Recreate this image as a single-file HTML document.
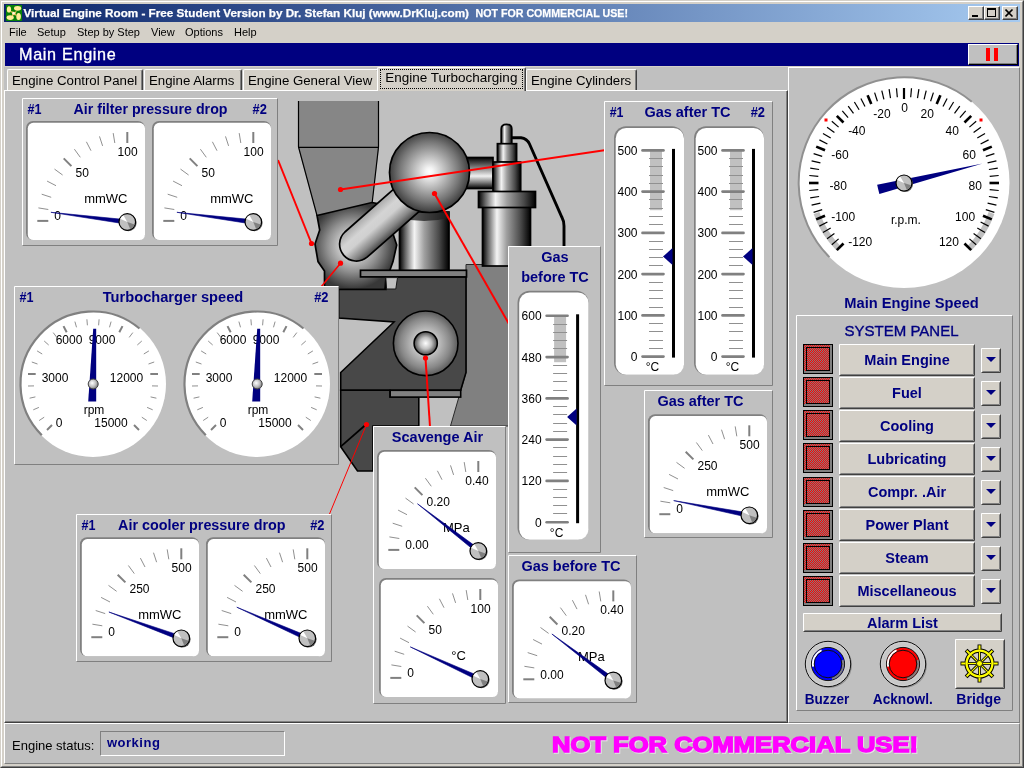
<!DOCTYPE html><html><head><meta charset="utf-8"><title>Virtual Engine Room</title><style>
*{box-sizing:border-box;margin:0;padding:0}
html,body{width:1024px;height:768px;overflow:hidden;background:#d4d0c8;font-family:"Liberation Sans",sans-serif;}
#w{position:absolute;left:0;top:0;width:1024px;height:768px;background:#d4d0c8;overflow:hidden;will-change:transform}
svg{will-change:transform}
.a{position:absolute}
.t{position:absolute;white-space:nowrap;line-height:1}
.nb{color:#000080;font-weight:bold;font-size:14px}
.raised{border:1px solid;border-color:#fff #808080 #808080 #fff;background:#c0c0c0}
.btn{position:absolute;background:#d4d0c8;border:1px solid;border-color:#fff #404040 #404040 #fff;box-shadow:inset -1px -1px 0 #808080}
</style></head><body><div id="w">
<div class="a" style="left:0;top:0;width:1024px;height:768px;border:1px solid;border-color:#d4d0c8 #404040 #404040 #d4d0c8"></div>
<div class="a" style="left:1px;top:1px;width:1022px;height:766px;border:1px solid;border-color:#fff #808080 #808080 #fff"></div>
<div class="a" style="left:4px;top:4px;width:1016px;height:18px;background:linear-gradient(to right,#0a246a,#a6caf0)"></div>
<svg class="a" style="left:0;top:0" width="1024" height="24" viewBox="0 0 1024 24" font-family="Liberation Sans, sans-serif" font-size="11.4" font-weight="bold" fill="#fff" stroke="#fff" stroke-width="0.25"><text x="23.5" y="16.8" textLength="445.5" lengthAdjust="spacingAndGlyphs">Virtual Engine Room - Free Student Version by Dr. Stefan Kluj (www.DrKluj.com)</text><text x="475.5" y="16.8" textLength="152.5" lengthAdjust="spacingAndGlyphs">NOT FOR COMMERCIAL USE!</text></svg>
<svg class="a" style="left:6px;top:5px" width="16" height="16" viewBox="0 0 16 16"><rect width="16" height="16" fill="#088008"/><ellipse cx="3" cy="4.4" rx="2.1" ry="3.2" fill="#ffec98"/><ellipse cx="11.6" cy="3.3" rx="3.6" ry="2.4" fill="#ffec98"/><ellipse cx="12.6" cy="11.4" rx="2.3" ry="3.5" fill="#ffec98"/><ellipse cx="4.2" cy="12.6" rx="3.6" ry="2.4" fill="#ffec98"/><path d="M4 6 L9 7 L11 5 L9.5 9 L11.5 11 L8 10 L5.5 11.5 L6.5 8.5 Z" fill="#f4c860"/><circle cx="7.6" cy="8.3" r="1.2" fill="#fff8e0"/></svg>
<div class="btn" style="left:968px;top:6px;width:16px;height:14px"></div>
<div class="btn" style="left:984px;top:6px;width:16px;height:14px"></div>
<div class="btn" style="left:1002px;top:6px;width:16px;height:14px"></div>
<div class="a" style="left:972px;top:15px;width:6px;height:2px;background:#000"></div>
<div class="a" style="left:987px;top:8px;width:9px;height:9px;border:1px solid #000;border-top-width:2px"></div>
<svg class="a" style="left:1005px;top:9px" width="9" height="8" viewBox="0 0 9 8"><path d="M0.5 0.5 L7.5 7.5 M7.5 0.5 L0.5 7.5" stroke="#000" stroke-width="1.6" fill="none"/></svg>
<div class="t" style="left:9px;top:27px;font-size:11px;color:#000">File</div>
<div class="t" style="left:37px;top:27px;font-size:11px;color:#000">Setup</div>
<div class="t" style="left:77px;top:27px;font-size:11px;color:#000">Step by Step</div>
<div class="t" style="left:151px;top:27px;font-size:11px;color:#000">View</div>
<div class="t" style="left:185px;top:27px;font-size:11px;color:#000">Options</div>
<div class="t" style="left:234px;top:27px;font-size:11px;color:#000">Help</div>
<div class="a" style="left:5px;top:43px;width:1014px;height:23px;background:#000080"></div>
<div class="t" style="left:19px;top:45.6px;font-size:16.2px;color:#fff;letter-spacing:0.68px;-webkit-text-stroke:0.3px #fff">Main Engine</div>
<div class="a" style="left:968px;top:44px;width:50px;height:21px;background:#c0c0c0;border:1px solid;border-color:#fff #000 #000 #fff;box-shadow:inset -1px -1px 0 #808080"></div>
<div class="a" style="left:986px;top:48px;width:4px;height:13px;background:#ff0000"></div>
<div class="a" style="left:994px;top:48px;width:4px;height:13px;background:#ff0000"></div>
<div class="a" style="left:4px;top:67px;width:1016px;height:656px;background:#c0c0c0"></div>
<div class="a" style="left:4px;top:90px;width:784px;height:633px;background:#c0c0c0;border:1px solid;border-color:#fff #404040 #404040 #fff;box-shadow:inset -1px -1px 0 #808080"></div>
<div class="a" style="left:7px;top:69px;width:136px;height:21px;background:#d4d0c8;border:1px solid;border-color:#fff #404040 #d4d0c8 #fff;border-bottom:none;border-radius:2px 2px 0 0;box-shadow:inset -1px 0 0 #808080"></div>
<div class="t" style="left:12px;top:74px;font-size:13.25px;color:#000">Engine Control Panel</div>
<div class="a" style="left:144px;top:69px;width:98px;height:21px;background:#d4d0c8;border:1px solid;border-color:#fff #404040 #d4d0c8 #fff;border-bottom:none;border-radius:2px 2px 0 0;box-shadow:inset -1px 0 0 #808080"></div>
<div class="t" style="left:149px;top:74px;font-size:13.25px;color:#000">Engine Alarms</div>
<div class="a" style="left:243px;top:69px;width:136px;height:21px;background:#d4d0c8;border:1px solid;border-color:#fff #404040 #d4d0c8 #fff;border-bottom:none;border-radius:2px 2px 0 0;box-shadow:inset -1px 0 0 #808080"></div>
<div class="t" style="left:248px;top:74px;font-size:13.25px;color:#000">Engine General View</div>
<div class="a" style="left:377px;top:67px;width:149px;height:24px;background:#d4d0c8;border:1px solid;border-color:#fff #404040 #d4d0c8 #fff;border-bottom:none;border-radius:2px 2px 0 0;box-shadow:inset -1px 0 0 #808080"></div>
<div class="a" style="left:380px;top:69px;width:143px;height:20px;border:1px dotted #000"></div>
<div class="t" style="left:385.3px;top:71.3px;font-size:13.5px;color:#000">Engine Turbocharging</div>
<div class="a" style="left:526px;top:69px;width:111px;height:21px;background:#d4d0c8;border:1px solid;border-color:#fff #404040 #d4d0c8 #fff;border-bottom:none;border-radius:2px 2px 0 0;box-shadow:inset -1px 0 0 #808080"></div>
<div class="t" style="left:531px;top:74px;font-size:13.25px;color:#000">Engine Cylinders</div>
<div class="a" style="left:788px;top:67px;width:232px;height:656px;background:#c0c0c0;border:1px solid;border-color:#fff #808080 #808080 #fff"></div>
<div class="a" style="left:4px;top:723px;width:1016px;height:41px;background:#c0c0c0;border:1px solid;border-color:#fff #808080 #808080 #fff"></div>
<div class="t" style="left:12px;top:739px;font-size:13px;color:#000">Engine status:</div>
<div class="a" style="left:100px;top:731px;width:185px;height:25px;border:1px solid;border-color:#808080 #fff #fff #808080"></div>
<div class="t" style="left:107px;top:736px;font-size:13px;color:#000080;font-weight:bold;letter-spacing:0.5px">working</div>
<svg class="a" style="left:0;top:720px" width="1024" height="48" viewBox="0 720 1024 48" font-family="Liberation Sans, sans-serif"><text x="553" y="752.8" font-size="21.3" font-weight="bold" fill="#e4e4e4" stroke="#e4e4e4" stroke-width="1.4" textLength="366" lengthAdjust="spacingAndGlyphs">NOT FOR COMMERCIAL USE!</text><text x="552" y="751.8" font-size="21.3" font-weight="bold" fill="#ff00ff" stroke="#ff00ff" stroke-width="1.4" textLength="366" lengthAdjust="spacingAndGlyphs">NOT FOR COMMERCIAL USE!</text></svg>
<svg class="a" style="left:0;top:0" width="1024" height="768" viewBox="0 0 1024 768" font-family="Liberation Sans, sans-serif"><defs>
<radialGradient id="sph" cx="50%" cy="49%" r="50%"><stop offset="0" stop-color="#fff"/><stop offset="0.1" stop-color="#f4f4f4"/><stop offset="0.45" stop-color="#b0b0b0"/><stop offset="0.75" stop-color="#767676"/><stop offset="1" stop-color="#404040"/></radialGradient>
<radialGradient id="sph2" cx="50%" cy="50%" r="55%"><stop offset="0" stop-color="#e0e0e0"/><stop offset="0.35" stop-color="#c0c0c0"/><stop offset="0.7" stop-color="#888888"/><stop offset="1" stop-color="#484848"/></radialGradient>
<radialGradient id="cmp" gradientUnits="userSpaceOnUse" cx="353" cy="246" r="43"><stop offset="0" stop-color="#f0f0f0"/><stop offset="0.33" stop-color="#c4c4c4"/><stop offset="0.6" stop-color="#909090"/><stop offset="0.85" stop-color="#585858"/><stop offset="1" stop-color="#383838"/></radialGradient><radialGradient id="sph3" cx="50%" cy="50%" r="50%"><stop offset="0" stop-color="#fff"/><stop offset="0.5" stop-color="#c0c0c0"/><stop offset="1" stop-color="#484848"/></radialGradient>
<radialGradient id="pv" cx="40%" cy="40%" r="60%"><stop offset="0" stop-color="#fff"/><stop offset="0.6" stop-color="#c0c0c0"/><stop offset="1" stop-color="#808080"/></radialGradient>
<linearGradient id="cylh" x1="0" x2="1" y1="0" y2="0"><stop offset="0" stop-color="#000"/><stop offset="0.12" stop-color="#686868"/><stop offset="0.3" stop-color="#f4f4f4"/><stop offset="0.5" stop-color="#a0a0a0"/><stop offset="0.8" stop-color="#484848"/><stop offset="1" stop-color="#000"/></linearGradient>
<linearGradient id="cylv" x1="0" x2="0" y1="0" y2="1"><stop offset="0" stop-color="#000"/><stop offset="0.2" stop-color="#505050"/><stop offset="0.6" stop-color="#f0f0f0"/><stop offset="0.8" stop-color="#808080"/><stop offset="1" stop-color="#000"/></linearGradient>
<linearGradient id="tube" gradientUnits="userSpaceOnUse" x1="344.9" y1="232" x2="367.1" y2="257.2"><stop offset="0" stop-color="#a8a8a8"/><stop offset="0.3" stop-color="#d4d4d4"/><stop offset="0.5" stop-color="#d0d0d0"/><stop offset="0.8" stop-color="#888888"/><stop offset="1" stop-color="#484848"/></linearGradient>
</defs><path d="M298 101 H379 V147 L372.3 202.5 L317 215.5 L298 147 Z" fill="#868686"/><path d="M298.5 101 V147 L317 215.5 M378.5 101 V147 L372.2 202.5" fill="none" stroke="#000" stroke-width="1.2"/><path d="M298.5 147.3 H378.5" stroke="#000" stroke-width="1.2"/><path d="M317 215.5 L372 202.5 L377 203.5 L393 233.8 L396.7 245 L393 261.6 L390 270 L386 277.4 L385 289.5 L324.5 289.5 L324.5 271 L318 261.6 L315 244 L319.7 230 Z" fill="url(#cmp)" stroke="#000" stroke-width="1.7"/><path d="M466 264.5 H540 V426 H450.5 L466 372.5 Z" fill="#808080" stroke="#282828" stroke-width="1"/><rect x="399.5" y="212" width="49.5" height="59" fill="url(#cylh)" stroke="#000" stroke-width="1.7"/><path d="M399.5 212 H449 V218 Q424 224 399.5 218 Z" fill="#202020" opacity="0.75"/><rect x="462" y="157.5" width="31" height="31" fill="url(#cylv)" stroke="#000" stroke-width="1.7"/><path d="M501.2 145 V129 Q501.2 124.3 506.5 124.3 Q511.8 124.3 511.8 129 V145 Z" fill="url(#cylh)" stroke="#000" stroke-width="1.7"/><rect x="497.4" y="143.7" width="19.2" height="18.5" fill="url(#cylh)" stroke="#000" stroke-width="1.7"/><rect x="493" y="162" width="27.7" height="30" fill="url(#cylh)" stroke="#000" stroke-width="1.7"/><rect x="482.5" y="206" width="48" height="60" fill="url(#cylh)" stroke="#000" stroke-width="1.7"/><rect x="478.5" y="191.5" width="57" height="16" fill="url(#cylh)" stroke="#000" stroke-width="1.7"/><path d="M512 137.7 H521 Q527 138.5 529.5 144 L562 217.5 Q564 221 564 226 V250" fill="none" stroke="#000" stroke-width="2.9"/><path d="M344.9 232 L405 179.1 L427.2 204.3 L367.1 257.2 A16.8 16.8 0 0 1 344.9 232 Z" fill="url(#tube)" stroke="#000" stroke-width="1.7"/><circle cx="429.5" cy="172.5" r="40" fill="url(#sph)" stroke="#000" stroke-width="1.7"/><path d="M338.7 289.5 H386 V277 H466 V372.5 L460.7 390.3 H340.7 V372.5 L394 322 L338.7 318 Z" fill="#484848" stroke="#000" stroke-width="1.6"/><path d="M340.7 390.3 H390 V397 H418.8 V426 H373 V471 H357.5 L340.7 446.7 Z" fill="#484848" stroke="#000" stroke-width="1.6"/><path d="M340.7 446.7 L366 424.5" stroke="#000" stroke-width="1.7"/><rect x="360.5" y="270.3" width="106" height="6.6" fill="#808080" stroke="#000" stroke-width="1.7"/><rect x="390.2" y="390.3" width="70.5" height="6.8" fill="#808080" stroke="#000" stroke-width="1.6"/><path d="M385.8 277.6 H397.5 L395.8 289 H386.6 Z" fill="#c0c0c0" stroke="#181818" stroke-width="1"/><circle cx="425.7" cy="343.3" r="32.3" fill="url(#sph2)" stroke="#000" stroke-width="1.6"/><circle cx="425.7" cy="343.3" r="11.6" fill="url(#sph3)" stroke="#000" stroke-width="1.6"/><line x1="340.5" y1="189.5" x2="606" y2="150" stroke="#ff0000" stroke-width="2"/><circle cx="340.5" cy="189.5" r="2.6" fill="#ff0000"/><line x1="311.5" y1="243.5" x2="278" y2="160" stroke="#ff0000" stroke-width="2"/><circle cx="311.5" cy="243.5" r="2.6" fill="#ff0000"/><line x1="340.5" y1="263.2" x2="321" y2="287" stroke="#ff0000" stroke-width="1.5"/><circle cx="340.5" cy="263.2" r="2.6" fill="#ff0000"/><line x1="434.5" y1="193.5" x2="509" y2="324" stroke="#ff0000" stroke-width="2"/><circle cx="434.5" cy="193.5" r="2.6" fill="#ff0000"/><line x1="425.5" y1="358" x2="430" y2="427" stroke="#ff0000" stroke-width="2"/><circle cx="425.5" cy="358" r="2.6" fill="#ff0000"/><line x1="366.5" y1="424.5" x2="329.5" y2="514" stroke="#ff0000" stroke-width="1"/><circle cx="366.5" cy="424.5" r="2.6" fill="#ff0000"/><rect x="22" y="98" width="256" height="148" fill="#c0c0c0"/><path d="M22.5 245.5 V98.5 H277.5" fill="none" stroke="#fff" stroke-width="1"/><path d="M22.5 245.5 H277.5 V98.5" fill="none" stroke="#808080" stroke-width="1"/><text x="150.5" y="114" font-size="14.5" font-weight="bold" fill="#000080" text-anchor="middle" textLength="154" lengthAdjust="spacingAndGlyphs">Air filter pressure drop</text><text x="27.6" y="114" font-size="14.5" font-weight="bold" fill="#000080" text-anchor="start" textLength="14" lengthAdjust="spacingAndGlyphs">#1</text><text x="266.8" y="114" font-size="14.5" font-weight="bold" fill="#000080" text-anchor="end" textLength="14.3" lengthAdjust="spacingAndGlyphs">#2</text><rect x="26" y="121" width="119" height="119" rx="7" fill="#808080"/><rect x="27.8" y="122.8" width="117.2" height="117.2" rx="5.5" fill="#fff"/><line x1="37.3" y1="220.9" x2="48.3" y2="220.9" stroke="#808080" stroke-width="2"/><line x1="38.4" y1="207.9" x2="48.3" y2="209.5" stroke="#909090" stroke-width="1"/><line x1="41.7" y1="194.2" x2="51.2" y2="197.3" stroke="#909090" stroke-width="1"/><line x1="47.1" y1="181.1" x2="56.0" y2="185.7" stroke="#909090" stroke-width="1"/><line x1="54.5" y1="169.1" x2="62.6" y2="175.0" stroke="#909090" stroke-width="1"/><line x1="63.7" y1="158.4" x2="71.4" y2="166.1" stroke="#808080" stroke-width="2"/><line x1="74.4" y1="149.2" x2="80.3" y2="157.3" stroke="#909090" stroke-width="1"/><line x1="86.4" y1="141.8" x2="91.0" y2="150.7" stroke="#909090" stroke-width="1"/><line x1="99.5" y1="136.4" x2="102.6" y2="145.9" stroke="#909090" stroke-width="1"/><line x1="113.2" y1="133.1" x2="114.8" y2="143.0" stroke="#909090" stroke-width="1"/><line x1="127.3" y1="132.0" x2="127.3" y2="143.0" stroke="#808080" stroke-width="2"/><text x="54.3" y="220.1" font-size="12" fill="#000" text-anchor="start">0</text><text x="75.5" y="177" font-size="12" fill="#000" text-anchor="start">50</text><text x="137.6" y="156" font-size="12" fill="#000" text-anchor="end">100</text><text x="105.8" y="203" font-size="13" fill="#000" text-anchor="middle">mmWC</text><path d="M50.9 212.3 L127.6 219.8 L127.0 224.2 Z" fill="#000080" stroke="#000080" stroke-width="0.6"/><circle cx="128.3" cy="223" r="8.3" fill="#606060"/><circle cx="127.3" cy="222" r="8.3" fill="#c0c0c0" stroke="#000" stroke-width="1.2"/><path d="M127.3 222 L120.2 218.8 A8.3 8.3 0 0 1 123.4 215.2 Z" fill="#fff"/><path d="M127.3 222 L134.7 224.4 A8.3 8.3 0 0 1 130.2 229.2 Z" fill="#808080"/><rect x="152" y="121" width="119" height="119" rx="7" fill="#808080"/><rect x="153.8" y="122.8" width="117.2" height="117.2" rx="5.5" fill="#fff"/><line x1="163.3" y1="220.9" x2="174.3" y2="220.9" stroke="#808080" stroke-width="2"/><line x1="164.4" y1="207.9" x2="174.3" y2="209.5" stroke="#909090" stroke-width="1"/><line x1="167.7" y1="194.2" x2="177.2" y2="197.3" stroke="#909090" stroke-width="1"/><line x1="173.1" y1="181.1" x2="182.0" y2="185.7" stroke="#909090" stroke-width="1"/><line x1="180.5" y1="169.1" x2="188.6" y2="175.0" stroke="#909090" stroke-width="1"/><line x1="189.7" y1="158.4" x2="197.4" y2="166.1" stroke="#808080" stroke-width="2"/><line x1="200.4" y1="149.2" x2="206.3" y2="157.3" stroke="#909090" stroke-width="1"/><line x1="212.4" y1="141.8" x2="217.0" y2="150.7" stroke="#909090" stroke-width="1"/><line x1="225.5" y1="136.4" x2="228.6" y2="145.9" stroke="#909090" stroke-width="1"/><line x1="239.2" y1="133.1" x2="240.8" y2="143.0" stroke="#909090" stroke-width="1"/><line x1="253.3" y1="132.0" x2="253.3" y2="143.0" stroke="#808080" stroke-width="2"/><text x="180.3" y="220.1" font-size="12" fill="#000" text-anchor="start">0</text><text x="201.5" y="177" font-size="12" fill="#000" text-anchor="start">50</text><text x="263.6" y="156" font-size="12" fill="#000" text-anchor="end">100</text><text x="231.8" y="203" font-size="13" fill="#000" text-anchor="middle">mmWC</text><path d="M176.9 212.3 L253.6 219.8 L253.0 224.2 Z" fill="#000080" stroke="#000080" stroke-width="0.6"/><circle cx="254.3" cy="223" r="8.3" fill="#606060"/><circle cx="253.3" cy="222" r="8.3" fill="#c0c0c0" stroke="#000" stroke-width="1.2"/><path d="M253.3 222 L246.2 218.8 A8.3 8.3 0 0 1 249.4 215.2 Z" fill="#fff"/><path d="M253.3 222 L260.7 224.4 A8.3 8.3 0 0 1 256.2 229.2 Z" fill="#808080"/><rect x="14" y="286" width="325" height="179" fill="#c0c0c0"/><path d="M14.5 464.5 V286.5 H338.5" fill="none" stroke="#fff" stroke-width="1"/><path d="M14.5 464.5 H338.5 V286.5" fill="none" stroke="#808080" stroke-width="1"/><text x="173" y="302" font-size="14.5" font-weight="bold" fill="#000080" text-anchor="middle" textLength="140.5" lengthAdjust="spacingAndGlyphs">Turbocharger speed</text><text x="19.5" y="302" font-size="14.5" font-weight="bold" fill="#000080" text-anchor="start" textLength="14" lengthAdjust="spacingAndGlyphs">#1</text><text x="328.5" y="302" font-size="14.5" font-weight="bold" fill="#000080" text-anchor="end" textLength="14.3" lengthAdjust="spacingAndGlyphs">#2</text><circle cx="93" cy="384" r="73" fill="#fff"/><path d="M41.8 435.2 A72.4 72.4 0 0 1 139.5 328.5" fill="none" stroke="#808080" stroke-width="2.2"/><line x1="47.0" y1="430.0" x2="52.0" y2="425.0" stroke="#808080" stroke-width="2"/><line x1="39.2" y1="420.5" x2="44.2" y2="417.2" stroke="#909090" stroke-width="1"/><line x1="33.3" y1="409.8" x2="38.9" y2="407.4" stroke="#909090" stroke-width="1"/><line x1="29.6" y1="398.2" x2="35.4" y2="396.9" stroke="#909090" stroke-width="1"/><line x1="28.0" y1="386.0" x2="34.0" y2="385.9" stroke="#909090" stroke-width="1"/><line x1="28" y1="374" x2="35.7" y2="374" stroke="#808080" stroke-width="2"/><line x1="31.8" y1="362.0" x2="37.5" y2="364.0" stroke="#909090" stroke-width="1"/><line x1="37.1" y1="350.9" x2="42.2" y2="354.0" stroke="#909090" stroke-width="1"/><line x1="44.2" y1="341.0" x2="48.7" y2="345.0" stroke="#909090" stroke-width="1"/><line x1="53.2" y1="332.6" x2="56.8" y2="337.4" stroke="#909090" stroke-width="1"/><line x1="63.5" y1="326.1" x2="66.7" y2="332.3" stroke="#808080" stroke-width="2"/><line x1="74.9" y1="321.6" x2="76.5" y2="327.3" stroke="#909090" stroke-width="1"/><line x1="86.9" y1="319.3" x2="87.4" y2="325.3" stroke="#909090" stroke-width="1"/><line x1="99.1" y1="319.3" x2="98.6" y2="325.3" stroke="#909090" stroke-width="1"/><line x1="111.1" y1="321.6" x2="109.5" y2="327.3" stroke="#909090" stroke-width="1"/><line x1="122.5" y1="326.1" x2="119.3" y2="332.3" stroke="#808080" stroke-width="2"/><line x1="132.8" y1="332.6" x2="129.2" y2="337.4" stroke="#909090" stroke-width="1"/><line x1="141.8" y1="341.0" x2="137.3" y2="345.0" stroke="#909090" stroke-width="1"/><line x1="148.9" y1="350.9" x2="143.8" y2="354.0" stroke="#909090" stroke-width="1"/><line x1="154.2" y1="362.0" x2="148.5" y2="364.0" stroke="#909090" stroke-width="1"/><line x1="158" y1="374" x2="150.3" y2="374" stroke="#808080" stroke-width="2"/><line x1="158.0" y1="386.0" x2="152.0" y2="385.9" stroke="#909090" stroke-width="1"/><line x1="156.4" y1="398.2" x2="150.6" y2="396.9" stroke="#909090" stroke-width="1"/><line x1="152.7" y1="409.8" x2="147.1" y2="407.4" stroke="#909090" stroke-width="1"/><line x1="146.8" y1="420.5" x2="141.8" y2="417.2" stroke="#909090" stroke-width="1"/><line x1="139.0" y1="430.0" x2="134.0" y2="425.0" stroke="#808080" stroke-width="2"/><text x="55" y="382" font-size="12" fill="#000" text-anchor="middle">3000</text><text x="126.5" y="382" font-size="12" fill="#000" text-anchor="middle">12000</text><text x="69" y="344" font-size="12" fill="#000" text-anchor="middle">6000</text><text x="102" y="344" font-size="12" fill="#000" text-anchor="middle">9000</text><text x="59" y="427" font-size="12" fill="#000" text-anchor="middle">0</text><text x="111" y="427" font-size="12" fill="#000" text-anchor="middle">15000</text><text x="94" y="413.5" font-size="12" fill="#000" text-anchor="middle">rpm</text><path d="M93.2 328.8 L96.2 328.8 L96.2 401.5 L88.2 401.5 Z" fill="#000080"/><circle cx="93.2" cy="384" r="5" fill="url(#pv)" stroke="#404040" stroke-width="1"/><circle cx="257" cy="384" r="73" fill="#fff"/><path d="M205.8 435.2 A72.4 72.4 0 0 1 303.5 328.5" fill="none" stroke="#808080" stroke-width="2.2"/><line x1="211.0" y1="430.0" x2="216.0" y2="425.0" stroke="#808080" stroke-width="2"/><line x1="203.2" y1="420.5" x2="208.2" y2="417.2" stroke="#909090" stroke-width="1"/><line x1="197.3" y1="409.8" x2="202.9" y2="407.4" stroke="#909090" stroke-width="1"/><line x1="193.6" y1="398.2" x2="199.4" y2="396.9" stroke="#909090" stroke-width="1"/><line x1="192.0" y1="386.0" x2="198.0" y2="385.9" stroke="#909090" stroke-width="1"/><line x1="192" y1="374" x2="199.7" y2="374" stroke="#808080" stroke-width="2"/><line x1="195.8" y1="362.0" x2="201.5" y2="364.0" stroke="#909090" stroke-width="1"/><line x1="201.1" y1="350.9" x2="206.2" y2="354.0" stroke="#909090" stroke-width="1"/><line x1="208.2" y1="341.0" x2="212.7" y2="345.0" stroke="#909090" stroke-width="1"/><line x1="217.2" y1="332.6" x2="220.8" y2="337.4" stroke="#909090" stroke-width="1"/><line x1="227.5" y1="326.1" x2="230.7" y2="332.3" stroke="#808080" stroke-width="2"/><line x1="238.9" y1="321.6" x2="240.5" y2="327.3" stroke="#909090" stroke-width="1"/><line x1="250.9" y1="319.3" x2="251.4" y2="325.3" stroke="#909090" stroke-width="1"/><line x1="263.1" y1="319.3" x2="262.6" y2="325.3" stroke="#909090" stroke-width="1"/><line x1="275.1" y1="321.6" x2="273.5" y2="327.3" stroke="#909090" stroke-width="1"/><line x1="286.5" y1="326.1" x2="283.3" y2="332.3" stroke="#808080" stroke-width="2"/><line x1="296.8" y1="332.6" x2="293.2" y2="337.4" stroke="#909090" stroke-width="1"/><line x1="305.8" y1="341.0" x2="301.3" y2="345.0" stroke="#909090" stroke-width="1"/><line x1="312.9" y1="350.9" x2="307.8" y2="354.0" stroke="#909090" stroke-width="1"/><line x1="318.2" y1="362.0" x2="312.5" y2="364.0" stroke="#909090" stroke-width="1"/><line x1="322" y1="374" x2="314.3" y2="374" stroke="#808080" stroke-width="2"/><line x1="322.0" y1="386.0" x2="316.0" y2="385.9" stroke="#909090" stroke-width="1"/><line x1="320.4" y1="398.2" x2="314.6" y2="396.9" stroke="#909090" stroke-width="1"/><line x1="316.7" y1="409.8" x2="311.1" y2="407.4" stroke="#909090" stroke-width="1"/><line x1="310.8" y1="420.5" x2="305.8" y2="417.2" stroke="#909090" stroke-width="1"/><line x1="303.0" y1="430.0" x2="298.0" y2="425.0" stroke="#808080" stroke-width="2"/><text x="219" y="382" font-size="12" fill="#000" text-anchor="middle">3000</text><text x="290.5" y="382" font-size="12" fill="#000" text-anchor="middle">12000</text><text x="233" y="344" font-size="12" fill="#000" text-anchor="middle">6000</text><text x="266" y="344" font-size="12" fill="#000" text-anchor="middle">9000</text><text x="223" y="427" font-size="12" fill="#000" text-anchor="middle">0</text><text x="275" y="427" font-size="12" fill="#000" text-anchor="middle">15000</text><text x="258" y="413.5" font-size="12" fill="#000" text-anchor="middle">rpm</text><path d="M257.2 328.8 L260.2 328.8 L260.2 401.5 L252.2 401.5 Z" fill="#000080"/><circle cx="257.2" cy="384" r="5" fill="url(#pv)" stroke="#404040" stroke-width="1"/><rect x="76" y="514" width="256" height="148" fill="#c0c0c0"/><path d="M76.5 661.5 V514.5 H331.5" fill="none" stroke="#fff" stroke-width="1"/><path d="M76.5 661.5 H331.5 V514.5" fill="none" stroke="#808080" stroke-width="1"/><text x="201.8" y="530" font-size="14.5" font-weight="bold" fill="#000080" text-anchor="middle" textLength="167.5" lengthAdjust="spacingAndGlyphs">Air cooler pressure drop</text><text x="81.6" y="530" font-size="14.5" font-weight="bold" fill="#000080" text-anchor="start" textLength="14" lengthAdjust="spacingAndGlyphs">#1</text><text x="324.5" y="530" font-size="14.5" font-weight="bold" fill="#000080" text-anchor="end" textLength="14.3" lengthAdjust="spacingAndGlyphs">#2</text><rect x="80" y="537.3" width="119" height="119" rx="7" fill="#808080"/><rect x="81.8" y="539.0999999999999" width="117.2" height="117.2" rx="5.5" fill="#fff"/><line x1="91.3" y1="637.2" x2="102.3" y2="637.2" stroke="#808080" stroke-width="2"/><line x1="92.4" y1="624.2" x2="102.3" y2="625.8" stroke="#909090" stroke-width="1"/><line x1="95.7" y1="610.5" x2="105.2" y2="613.6" stroke="#909090" stroke-width="1"/><line x1="101.1" y1="597.4" x2="110.0" y2="602.0" stroke="#909090" stroke-width="1"/><line x1="108.5" y1="585.4" x2="116.6" y2="591.3" stroke="#909090" stroke-width="1"/><line x1="117.7" y1="574.7" x2="125.4" y2="582.4" stroke="#808080" stroke-width="2"/><line x1="128.4" y1="565.5" x2="134.3" y2="573.6" stroke="#909090" stroke-width="1"/><line x1="140.4" y1="558.1" x2="145.0" y2="567.0" stroke="#909090" stroke-width="1"/><line x1="153.5" y1="552.7" x2="156.6" y2="562.2" stroke="#909090" stroke-width="1"/><line x1="167.2" y1="549.4" x2="168.8" y2="559.3" stroke="#909090" stroke-width="1"/><line x1="181.3" y1="548.3" x2="181.3" y2="559.3" stroke="#808080" stroke-width="2"/><text x="108.30000000000001" y="636.4" font-size="12" fill="#000" text-anchor="start">0</text><text x="129.5" y="593.3" font-size="12" fill="#000" text-anchor="start">250</text><text x="191.60000000000002" y="572.3" font-size="12" fill="#000" text-anchor="end">500</text><text x="159.8" y="619.3" font-size="13" fill="#000" text-anchor="middle">mmWC</text><path d="M108.9 612.0 L182.1 636.2 L180.5 640.4 Z" fill="#000080" stroke="#000080" stroke-width="0.6"/><circle cx="182.3" cy="639.3" r="8.3" fill="#606060"/><circle cx="181.3" cy="638.3" r="8.3" fill="#c0c0c0" stroke="#000" stroke-width="1.2"/><path d="M181.3 638.3 L174.2 635.1 A8.3 8.3 0 0 1 177.4 631.5 Z" fill="#fff"/><path d="M181.3 638.3 L188.7 640.7 A8.3 8.3 0 0 1 184.2 645.5 Z" fill="#808080"/><rect x="206" y="537.3" width="119" height="119" rx="7" fill="#808080"/><rect x="207.8" y="539.0999999999999" width="117.2" height="117.2" rx="5.5" fill="#fff"/><line x1="217.3" y1="637.2" x2="228.3" y2="637.2" stroke="#808080" stroke-width="2"/><line x1="218.4" y1="624.2" x2="228.3" y2="625.8" stroke="#909090" stroke-width="1"/><line x1="221.7" y1="610.5" x2="231.2" y2="613.6" stroke="#909090" stroke-width="1"/><line x1="227.1" y1="597.4" x2="236.0" y2="602.0" stroke="#909090" stroke-width="1"/><line x1="234.5" y1="585.4" x2="242.6" y2="591.3" stroke="#909090" stroke-width="1"/><line x1="243.7" y1="574.7" x2="251.4" y2="582.4" stroke="#808080" stroke-width="2"/><line x1="254.4" y1="565.5" x2="260.3" y2="573.6" stroke="#909090" stroke-width="1"/><line x1="266.4" y1="558.1" x2="271.0" y2="567.0" stroke="#909090" stroke-width="1"/><line x1="279.5" y1="552.7" x2="282.6" y2="562.2" stroke="#909090" stroke-width="1"/><line x1="293.2" y1="549.4" x2="294.8" y2="559.3" stroke="#909090" stroke-width="1"/><line x1="307.3" y1="548.3" x2="307.3" y2="559.3" stroke="#808080" stroke-width="2"/><text x="234.3" y="636.4" font-size="12" fill="#000" text-anchor="start">0</text><text x="255.5" y="593.3" font-size="12" fill="#000" text-anchor="start">250</text><text x="317.6" y="572.3" font-size="12" fill="#000" text-anchor="end">500</text><text x="285.8" y="619.3" font-size="13" fill="#000" text-anchor="middle">mmWC</text><path d="M236.8 607.2 L308.2 636.3 L306.4 640.3 Z" fill="#000080" stroke="#000080" stroke-width="0.6"/><circle cx="308.3" cy="639.3" r="8.3" fill="#606060"/><circle cx="307.3" cy="638.3" r="8.3" fill="#c0c0c0" stroke="#000" stroke-width="1.2"/><path d="M307.3 638.3 L300.2 635.1 A8.3 8.3 0 0 1 303.4 631.5 Z" fill="#fff"/><path d="M307.3 638.3 L314.7 640.7 A8.3 8.3 0 0 1 310.2 645.5 Z" fill="#808080"/><rect x="604" y="101" width="169" height="285" fill="#c0c0c0"/><path d="M604.5 385.5 V101.5 H772.5" fill="none" stroke="#fff" stroke-width="1"/><path d="M604.5 385.5 H772.5 V101.5" fill="none" stroke="#808080" stroke-width="1"/><text x="687.5" y="116.7" font-size="14.5" font-weight="bold" fill="#000080" text-anchor="middle">Gas after TC</text><text x="609.7" y="116.7" font-size="14.5" font-weight="bold" fill="#000080" text-anchor="start" textLength="13.8" lengthAdjust="spacingAndGlyphs">#1</text><text x="765" y="116.7" font-size="14.5" font-weight="bold" fill="#000080" text-anchor="end" textLength="14.3" lengthAdjust="spacingAndGlyphs">#2</text><rect x="614" y="126.3" width="70" height="248.5" rx="12" fill="#808080"/><rect x="615.7" y="128.0" width="68.3" height="246.8" rx="10.5" fill="#fff"/><rect x="650" y="150.4" width="12" height="59.8" fill="#c0c0c0"/><line x1="642.5" y1="356.6" x2="663.5" y2="356.6" stroke="#808080" stroke-width="2.6" stroke-linecap="round"/><text x="637.5" y="361.1" font-size="12" fill="#000" text-anchor="end">0</text><line x1="649" y1="348.5" x2="663" y2="348.5" stroke="#909090" stroke-width="1"/><line x1="649" y1="340.5" x2="663" y2="340.5" stroke="#909090" stroke-width="1"/><line x1="649" y1="331.5" x2="663" y2="331.5" stroke="#909090" stroke-width="1"/><line x1="649" y1="323.5" x2="663" y2="323.5" stroke="#909090" stroke-width="1"/><line x1="642.5" y1="315.4" x2="663.5" y2="315.4" stroke="#808080" stroke-width="2.6" stroke-linecap="round"/><text x="637.5" y="319.9" font-size="12" fill="#000" text-anchor="end">100</text><line x1="649" y1="307.5" x2="663" y2="307.5" stroke="#909090" stroke-width="1"/><line x1="649" y1="298.5" x2="663" y2="298.5" stroke="#909090" stroke-width="1"/><line x1="649" y1="290.5" x2="663" y2="290.5" stroke="#909090" stroke-width="1"/><line x1="649" y1="282.5" x2="663" y2="282.5" stroke="#909090" stroke-width="1"/><line x1="642.5" y1="274.1" x2="663.5" y2="274.1" stroke="#808080" stroke-width="2.6" stroke-linecap="round"/><text x="637.5" y="278.6" font-size="12" fill="#000" text-anchor="end">200</text><line x1="649" y1="265.5" x2="663" y2="265.5" stroke="#909090" stroke-width="1"/><line x1="649" y1="257.5" x2="663" y2="257.5" stroke="#909090" stroke-width="1"/><line x1="649" y1="249.5" x2="663" y2="249.5" stroke="#909090" stroke-width="1"/><line x1="649" y1="241.5" x2="663" y2="241.5" stroke="#909090" stroke-width="1"/><line x1="642.5" y1="232.9" x2="663.5" y2="232.9" stroke="#808080" stroke-width="2.6" stroke-linecap="round"/><text x="637.5" y="237.4" font-size="12" fill="#000" text-anchor="end">300</text><line x1="649" y1="224.5" x2="663" y2="224.5" stroke="#909090" stroke-width="1"/><line x1="649" y1="216.5" x2="663" y2="216.5" stroke="#909090" stroke-width="1"/><line x1="649" y1="208.5" x2="663" y2="208.5" stroke="#909090" stroke-width="1"/><line x1="649" y1="199.5" x2="663" y2="199.5" stroke="#909090" stroke-width="1"/><line x1="642.5" y1="191.6" x2="663.5" y2="191.6" stroke="#808080" stroke-width="2.6" stroke-linecap="round"/><text x="637.5" y="196.1" font-size="12" fill="#000" text-anchor="end">400</text><line x1="649" y1="183.5" x2="663" y2="183.5" stroke="#909090" stroke-width="1"/><line x1="649" y1="175.5" x2="663" y2="175.5" stroke="#909090" stroke-width="1"/><line x1="649" y1="166.5" x2="663" y2="166.5" stroke="#909090" stroke-width="1"/><line x1="649" y1="158.5" x2="663" y2="158.5" stroke="#909090" stroke-width="1"/><line x1="642.5" y1="150.4" x2="663.5" y2="150.4" stroke="#808080" stroke-width="2.6" stroke-linecap="round"/><text x="637.5" y="154.9" font-size="12" fill="#000" text-anchor="end">500</text><rect x="672" y="148.9" width="3" height="208.70000000000002" fill="#000"/><path d="M663 256.6 L672.5 248.1 L672.5 265.1 Z" fill="#000080"/><text x="652.5" y="371.1" font-size="12" fill="#000" text-anchor="middle">°C</text><rect x="694" y="126.3" width="70" height="248.5" rx="12" fill="#808080"/><rect x="695.7" y="128.0" width="68.3" height="246.8" rx="10.5" fill="#fff"/><rect x="730" y="150.4" width="12" height="59.8" fill="#c0c0c0"/><line x1="722.5" y1="356.6" x2="743.5" y2="356.6" stroke="#808080" stroke-width="2.6" stroke-linecap="round"/><text x="717.5" y="361.1" font-size="12" fill="#000" text-anchor="end">0</text><line x1="729" y1="348.5" x2="743" y2="348.5" stroke="#909090" stroke-width="1"/><line x1="729" y1="340.5" x2="743" y2="340.5" stroke="#909090" stroke-width="1"/><line x1="729" y1="331.5" x2="743" y2="331.5" stroke="#909090" stroke-width="1"/><line x1="729" y1="323.5" x2="743" y2="323.5" stroke="#909090" stroke-width="1"/><line x1="722.5" y1="315.4" x2="743.5" y2="315.4" stroke="#808080" stroke-width="2.6" stroke-linecap="round"/><text x="717.5" y="319.9" font-size="12" fill="#000" text-anchor="end">100</text><line x1="729" y1="307.5" x2="743" y2="307.5" stroke="#909090" stroke-width="1"/><line x1="729" y1="298.5" x2="743" y2="298.5" stroke="#909090" stroke-width="1"/><line x1="729" y1="290.5" x2="743" y2="290.5" stroke="#909090" stroke-width="1"/><line x1="729" y1="282.5" x2="743" y2="282.5" stroke="#909090" stroke-width="1"/><line x1="722.5" y1="274.1" x2="743.5" y2="274.1" stroke="#808080" stroke-width="2.6" stroke-linecap="round"/><text x="717.5" y="278.6" font-size="12" fill="#000" text-anchor="end">200</text><line x1="729" y1="265.5" x2="743" y2="265.5" stroke="#909090" stroke-width="1"/><line x1="729" y1="257.5" x2="743" y2="257.5" stroke="#909090" stroke-width="1"/><line x1="729" y1="249.5" x2="743" y2="249.5" stroke="#909090" stroke-width="1"/><line x1="729" y1="241.5" x2="743" y2="241.5" stroke="#909090" stroke-width="1"/><line x1="722.5" y1="232.9" x2="743.5" y2="232.9" stroke="#808080" stroke-width="2.6" stroke-linecap="round"/><text x="717.5" y="237.4" font-size="12" fill="#000" text-anchor="end">300</text><line x1="729" y1="224.5" x2="743" y2="224.5" stroke="#909090" stroke-width="1"/><line x1="729" y1="216.5" x2="743" y2="216.5" stroke="#909090" stroke-width="1"/><line x1="729" y1="208.5" x2="743" y2="208.5" stroke="#909090" stroke-width="1"/><line x1="729" y1="199.5" x2="743" y2="199.5" stroke="#909090" stroke-width="1"/><line x1="722.5" y1="191.6" x2="743.5" y2="191.6" stroke="#808080" stroke-width="2.6" stroke-linecap="round"/><text x="717.5" y="196.1" font-size="12" fill="#000" text-anchor="end">400</text><line x1="729" y1="183.5" x2="743" y2="183.5" stroke="#909090" stroke-width="1"/><line x1="729" y1="175.5" x2="743" y2="175.5" stroke="#909090" stroke-width="1"/><line x1="729" y1="166.5" x2="743" y2="166.5" stroke="#909090" stroke-width="1"/><line x1="729" y1="158.5" x2="743" y2="158.5" stroke="#909090" stroke-width="1"/><line x1="722.5" y1="150.4" x2="743.5" y2="150.4" stroke="#808080" stroke-width="2.6" stroke-linecap="round"/><text x="717.5" y="154.9" font-size="12" fill="#000" text-anchor="end">500</text><rect x="752" y="148.9" width="3" height="208.70000000000002" fill="#000"/><path d="M743 256.6 L752.5 248.1 L752.5 265.1 Z" fill="#000080"/><text x="732.5" y="371.1" font-size="12" fill="#000" text-anchor="middle">°C</text><rect x="508" y="246" width="93" height="307" fill="#c0c0c0"/><path d="M508.5 552.5 V246.5 H600.5" fill="none" stroke="#fff" stroke-width="1"/><path d="M508.5 552.5 H600.5 V246.5" fill="none" stroke="#808080" stroke-width="1"/><text x="555" y="261.5" font-size="14.5" font-weight="bold" fill="#000080" text-anchor="middle">Gas</text><text x="555" y="281.5" font-size="14.5" font-weight="bold" fill="#000080" text-anchor="middle">before TC</text><rect x="517.5" y="290.8" width="71" height="249" rx="12" fill="#808080"/><rect x="519.2" y="292.5" width="69.3" height="247.3" rx="10.5" fill="#fff"/><rect x="554.1" y="315.8" width="12" height="46.4" fill="#c0c0c0"/><line x1="546.6" y1="522.2" x2="567.6" y2="522.2" stroke="#808080" stroke-width="2.6" stroke-linecap="round"/><text x="541.6" y="526.7" font-size="12" fill="#000" text-anchor="end">0</text><line x1="553.1" y1="513.5" x2="567.1" y2="513.5" stroke="#909090" stroke-width="1"/><line x1="553.1" y1="505.5" x2="567.1" y2="505.5" stroke="#909090" stroke-width="1"/><line x1="553.1" y1="497.5" x2="567.1" y2="497.5" stroke="#909090" stroke-width="1"/><line x1="553.1" y1="489.5" x2="567.1" y2="489.5" stroke="#909090" stroke-width="1"/><line x1="546.6" y1="480.9" x2="567.6" y2="480.9" stroke="#808080" stroke-width="2.6" stroke-linecap="round"/><text x="541.6" y="485.4" font-size="12" fill="#000" text-anchor="end">120</text><line x1="553.1" y1="472.5" x2="567.1" y2="472.5" stroke="#909090" stroke-width="1"/><line x1="553.1" y1="464.5" x2="567.1" y2="464.5" stroke="#909090" stroke-width="1"/><line x1="553.1" y1="456.5" x2="567.1" y2="456.5" stroke="#909090" stroke-width="1"/><line x1="553.1" y1="447.5" x2="567.1" y2="447.5" stroke="#909090" stroke-width="1"/><line x1="546.6" y1="439.6" x2="567.6" y2="439.6" stroke="#808080" stroke-width="2.6" stroke-linecap="round"/><text x="541.6" y="444.1" font-size="12" fill="#000" text-anchor="end">240</text><line x1="553.1" y1="431.5" x2="567.1" y2="431.5" stroke="#909090" stroke-width="1"/><line x1="553.1" y1="423.5" x2="567.1" y2="423.5" stroke="#909090" stroke-width="1"/><line x1="553.1" y1="414.5" x2="567.1" y2="414.5" stroke="#909090" stroke-width="1"/><line x1="553.1" y1="406.5" x2="567.1" y2="406.5" stroke="#909090" stroke-width="1"/><line x1="546.6" y1="398.4" x2="567.6" y2="398.4" stroke="#808080" stroke-width="2.6" stroke-linecap="round"/><text x="541.6" y="402.9" font-size="12" fill="#000" text-anchor="end">360</text><line x1="553.1" y1="390.5" x2="567.1" y2="390.5" stroke="#909090" stroke-width="1"/><line x1="553.1" y1="381.5" x2="567.1" y2="381.5" stroke="#909090" stroke-width="1"/><line x1="553.1" y1="373.5" x2="567.1" y2="373.5" stroke="#909090" stroke-width="1"/><line x1="553.1" y1="365.5" x2="567.1" y2="365.5" stroke="#909090" stroke-width="1"/><line x1="546.6" y1="357.1" x2="567.6" y2="357.1" stroke="#808080" stroke-width="2.6" stroke-linecap="round"/><text x="541.6" y="361.6" font-size="12" fill="#000" text-anchor="end">480</text><line x1="553.1" y1="348.5" x2="567.1" y2="348.5" stroke="#909090" stroke-width="1"/><line x1="553.1" y1="340.5" x2="567.1" y2="340.5" stroke="#909090" stroke-width="1"/><line x1="553.1" y1="332.5" x2="567.1" y2="332.5" stroke="#909090" stroke-width="1"/><line x1="553.1" y1="324.5" x2="567.1" y2="324.5" stroke="#909090" stroke-width="1"/><line x1="546.6" y1="315.8" x2="567.6" y2="315.8" stroke="#808080" stroke-width="2.6" stroke-linecap="round"/><text x="541.6" y="320.3" font-size="12" fill="#000" text-anchor="end">600</text><rect x="576.1" y="314.3" width="3" height="208.90000000000003" fill="#000"/><path d="M567.1 416.9 L576.6 408.4 L576.6 425.4 Z" fill="#000080"/><text x="556.6" y="536.7" font-size="12" fill="#000" text-anchor="middle">°C</text><rect x="644" y="390" width="129" height="148" fill="#c0c0c0"/><path d="M644.5 537.5 V390.5 H772.5" fill="none" stroke="#fff" stroke-width="1"/><path d="M644.5 537.5 H772.5 V390.5" fill="none" stroke="#808080" stroke-width="1"/><text x="700.5" y="406" font-size="14.5" font-weight="bold" fill="#000080" text-anchor="middle">Gas after TC</text><rect x="648" y="414.3" width="119" height="119" rx="7" fill="#808080"/><rect x="649.8" y="416.1" width="117.2" height="117.2" rx="5.5" fill="#fff"/><line x1="659.3" y1="514.2" x2="670.3" y2="514.2" stroke="#808080" stroke-width="2"/><line x1="660.4" y1="501.2" x2="670.3" y2="502.8" stroke="#909090" stroke-width="1"/><line x1="663.7" y1="487.5" x2="673.2" y2="490.6" stroke="#909090" stroke-width="1"/><line x1="669.1" y1="474.4" x2="678.0" y2="479.0" stroke="#909090" stroke-width="1"/><line x1="676.5" y1="462.4" x2="684.6" y2="468.3" stroke="#909090" stroke-width="1"/><line x1="685.7" y1="451.7" x2="693.4" y2="459.4" stroke="#808080" stroke-width="2"/><line x1="696.4" y1="442.5" x2="702.3" y2="450.6" stroke="#909090" stroke-width="1"/><line x1="708.4" y1="435.1" x2="713.0" y2="444.0" stroke="#909090" stroke-width="1"/><line x1="721.5" y1="429.7" x2="724.6" y2="439.2" stroke="#909090" stroke-width="1"/><line x1="735.2" y1="426.4" x2="736.8" y2="436.3" stroke="#909090" stroke-width="1"/><line x1="749.3" y1="425.3" x2="749.3" y2="436.3" stroke="#808080" stroke-width="2"/><text x="676.3" y="513.4" font-size="12" fill="#000" text-anchor="start">0</text><text x="697.5" y="470.29999999999995" font-size="12" fill="#000" text-anchor="start">250</text><text x="759.5999999999999" y="449.29999999999995" font-size="12" fill="#000" text-anchor="end">500</text><text x="727.8" y="496.29999999999995" font-size="13" fill="#000" text-anchor="middle">mmWC</text><path d="M673.7 500.6 L749.7 513.1 L748.9 517.5 Z" fill="#000080" stroke="#000080" stroke-width="0.6"/><circle cx="750.3" cy="516.3" r="8.3" fill="#606060"/><circle cx="749.3" cy="515.3" r="8.3" fill="#c0c0c0" stroke="#000" stroke-width="1.2"/><path d="M749.3 515.3 L742.2 512.1 A8.3 8.3 0 0 1 745.4 508.5 Z" fill="#fff"/><path d="M749.3 515.3 L756.7 517.7 A8.3 8.3 0 0 1 752.2 522.5 Z" fill="#808080"/><rect x="373" y="426" width="133" height="278" fill="#c0c0c0"/><path d="M373.5 703.5 V426.5 H505.5" fill="none" stroke="#fff" stroke-width="1"/><path d="M373.5 703.5 H505.5 V426.5" fill="none" stroke="#808080" stroke-width="1"/><text x="437.5" y="442" font-size="14.5" font-weight="bold" fill="#000080" text-anchor="middle">Scavenge Air</text><rect x="377" y="450" width="119" height="119" rx="7" fill="#808080"/><rect x="378.8" y="451.8" width="117.2" height="117.2" rx="5.5" fill="#fff"/><line x1="388.3" y1="549.9" x2="399.3" y2="549.9" stroke="#808080" stroke-width="2"/><line x1="389.4" y1="536.9" x2="399.3" y2="538.5" stroke="#909090" stroke-width="1"/><line x1="392.7" y1="523.2" x2="402.2" y2="526.3" stroke="#909090" stroke-width="1"/><line x1="398.1" y1="510.1" x2="407.0" y2="514.7" stroke="#909090" stroke-width="1"/><line x1="405.5" y1="498.1" x2="413.6" y2="504.0" stroke="#909090" stroke-width="1"/><line x1="414.7" y1="487.4" x2="422.4" y2="495.1" stroke="#808080" stroke-width="2"/><line x1="425.4" y1="478.2" x2="431.3" y2="486.3" stroke="#909090" stroke-width="1"/><line x1="437.4" y1="470.8" x2="442.0" y2="479.7" stroke="#909090" stroke-width="1"/><line x1="450.5" y1="465.4" x2="453.6" y2="474.9" stroke="#909090" stroke-width="1"/><line x1="464.2" y1="462.1" x2="465.8" y2="472.0" stroke="#909090" stroke-width="1"/><line x1="478.3" y1="461.0" x2="478.3" y2="472.0" stroke="#808080" stroke-width="2"/><text x="405.3" y="549.1" font-size="12" fill="#000" text-anchor="start">0.00</text><text x="426.5" y="506" font-size="12" fill="#000" text-anchor="start">0.20</text><text x="488.6" y="485" font-size="12" fill="#000" text-anchor="end">0.40</text><text x="456.40000000000003" y="532" font-size="13" fill="#000" text-anchor="middle">MPa</text><path d="M417.5 503.8 L479.6 549.3 L477.0 552.7 Z" fill="#000080" stroke="#000080" stroke-width="0.6"/><circle cx="479.3" cy="552" r="8.3" fill="#606060"/><circle cx="478.3" cy="551" r="8.3" fill="#c0c0c0" stroke="#000" stroke-width="1.2"/><path d="M478.3 551 L471.2 547.8 A8.3 8.3 0 0 1 474.4 544.2 Z" fill="#fff"/><path d="M478.3 551 L485.7 553.4 A8.3 8.3 0 0 1 481.2 558.2 Z" fill="#808080"/><rect x="379" y="578" width="119" height="119" rx="7" fill="#808080"/><rect x="380.8" y="579.8" width="117.2" height="117.2" rx="5.5" fill="#fff"/><line x1="390.3" y1="677.9" x2="401.3" y2="677.9" stroke="#808080" stroke-width="2"/><line x1="391.4" y1="664.9" x2="401.3" y2="666.5" stroke="#909090" stroke-width="1"/><line x1="394.7" y1="651.2" x2="404.2" y2="654.3" stroke="#909090" stroke-width="1"/><line x1="400.1" y1="638.1" x2="409.0" y2="642.7" stroke="#909090" stroke-width="1"/><line x1="407.5" y1="626.1" x2="415.6" y2="632.0" stroke="#909090" stroke-width="1"/><line x1="416.7" y1="615.4" x2="424.4" y2="623.1" stroke="#808080" stroke-width="2"/><line x1="427.4" y1="606.2" x2="433.3" y2="614.3" stroke="#909090" stroke-width="1"/><line x1="439.4" y1="598.8" x2="444.0" y2="607.7" stroke="#909090" stroke-width="1"/><line x1="452.5" y1="593.4" x2="455.6" y2="602.9" stroke="#909090" stroke-width="1"/><line x1="466.2" y1="590.1" x2="467.8" y2="600.0" stroke="#909090" stroke-width="1"/><line x1="480.3" y1="589.0" x2="480.3" y2="600.0" stroke="#808080" stroke-width="2"/><text x="407.3" y="677.1" font-size="12" fill="#000" text-anchor="start">0</text><text x="428.5" y="634" font-size="12" fill="#000" text-anchor="start">50</text><text x="490.6" y="613" font-size="12" fill="#000" text-anchor="end">100</text><text x="458.6" y="660" font-size="13" fill="#000" text-anchor="middle">°C</text><path d="M410.3 646.9 L481.2 677.0 L479.4 681.0 Z" fill="#000080" stroke="#000080" stroke-width="0.6"/><circle cx="481.3" cy="680" r="8.3" fill="#606060"/><circle cx="480.3" cy="679" r="8.3" fill="#c0c0c0" stroke="#000" stroke-width="1.2"/><path d="M480.3 679 L473.2 675.8 A8.3 8.3 0 0 1 476.4 672.2 Z" fill="#fff"/><path d="M480.3 679 L487.7 681.4 A8.3 8.3 0 0 1 483.2 686.2 Z" fill="#808080"/><rect x="508" y="555" width="129" height="148" fill="#c0c0c0"/><path d="M508.5 702.5 V555.5 H636.5" fill="none" stroke="#fff" stroke-width="1"/><path d="M508.5 702.5 H636.5 V555.5" fill="none" stroke="#808080" stroke-width="1"/><text x="571" y="570.6" font-size="14.5" font-weight="bold" fill="#000080" text-anchor="middle">Gas before TC</text><rect x="512" y="579.4" width="119" height="119" rx="7" fill="#808080"/><rect x="513.8" y="581.1999999999999" width="117.2" height="117.2" rx="5.5" fill="#fff"/><line x1="523.3" y1="679.3" x2="534.3" y2="679.3" stroke="#808080" stroke-width="2"/><line x1="524.4" y1="666.3" x2="534.3" y2="667.9" stroke="#909090" stroke-width="1"/><line x1="527.7" y1="652.6" x2="537.2" y2="655.7" stroke="#909090" stroke-width="1"/><line x1="533.1" y1="639.5" x2="542.0" y2="644.1" stroke="#909090" stroke-width="1"/><line x1="540.5" y1="627.5" x2="548.6" y2="633.4" stroke="#909090" stroke-width="1"/><line x1="549.7" y1="616.8" x2="557.4" y2="624.5" stroke="#808080" stroke-width="2"/><line x1="560.4" y1="607.6" x2="566.3" y2="615.7" stroke="#909090" stroke-width="1"/><line x1="572.4" y1="600.2" x2="577.0" y2="609.1" stroke="#909090" stroke-width="1"/><line x1="585.5" y1="594.8" x2="588.6" y2="604.3" stroke="#909090" stroke-width="1"/><line x1="599.2" y1="591.5" x2="600.8" y2="601.4" stroke="#909090" stroke-width="1"/><line x1="613.3" y1="590.4" x2="613.3" y2="601.4" stroke="#808080" stroke-width="2"/><text x="540.3" y="678.5" font-size="12" fill="#000" text-anchor="start">0.00</text><text x="561.5" y="635.4" font-size="12" fill="#000" text-anchor="start">0.20</text><text x="623.5999999999999" y="614.4" font-size="12" fill="#000" text-anchor="end">0.40</text><text x="591.4" y="661.4" font-size="13" fill="#000" text-anchor="middle">MPa</text><path d="M551.9 634.0 L614.6 678.6 L612.0 682.2 Z" fill="#000080" stroke="#000080" stroke-width="0.6"/><circle cx="614.3" cy="681.4" r="8.3" fill="#606060"/><circle cx="613.3" cy="680.4" r="8.3" fill="#c0c0c0" stroke="#000" stroke-width="1.2"/><path d="M613.3 680.4 L606.2 677.2 A8.3 8.3 0 0 1 609.4 673.6 Z" fill="#fff"/><path d="M613.3 680.4 L620.7 682.8 A8.3 8.3 0 0 1 616.2 687.6 Z" fill="#808080"/><circle cx="904" cy="182.5" r="105.5" fill="#fff"/><path d="M829.4 257.1 A105.5 105.5 0 0 1 971.8 101.7" fill="none" stroke="#909090" stroke-width="2"/><path d="M838.6 248.4 A92.5 92.5 0 0 1 816.5 213.1" fill="none" stroke="#c0c0c0" stroke-width="6"/><path d="M991.5 213.1 A92.5 92.5 0 0 1 969.4 248.4" fill="none" stroke="#c0c0c0" stroke-width="6"/><line x1="836.8" y1="250.2" x2="843.5" y2="243.5" stroke="#000" stroke-width="2.6"/><line x1="831.8" y1="244.7" x2="838.6" y2="238.9" stroke="#000" stroke-width="1.2"/><line x1="827.1" y1="238.8" x2="834.4" y2="233.5" stroke="#000" stroke-width="1.2"/><line x1="823.0" y1="232.6" x2="830.7" y2="227.9" stroke="#000" stroke-width="1.2"/><line x1="819.4" y1="226.1" x2="827.4" y2="222.0" stroke="#000" stroke-width="1.2"/><line x1="816.2" y1="219.4" x2="825.0" y2="215.7" stroke="#000" stroke-width="2.6"/><line x1="813.6" y1="212.4" x2="822.2" y2="209.6" stroke="#000" stroke-width="1.2"/><line x1="811.6" y1="205.2" x2="820.4" y2="203.1" stroke="#000" stroke-width="1.2"/><line x1="810.2" y1="197.9" x2="819.1" y2="196.5" stroke="#000" stroke-width="1.2"/><line x1="809.3" y1="190.5" x2="818.3" y2="189.7" stroke="#000" stroke-width="1.2"/><line x1="809.0" y1="183.0" x2="818.5" y2="183.0" stroke="#000" stroke-width="2.6"/><line x1="809.3" y1="175.5" x2="818.3" y2="176.3" stroke="#000" stroke-width="1.2"/><line x1="810.2" y1="168.1" x2="819.1" y2="169.5" stroke="#000" stroke-width="1.2"/><line x1="811.6" y1="160.8" x2="820.4" y2="162.9" stroke="#000" stroke-width="1.2"/><line x1="813.6" y1="153.6" x2="822.2" y2="156.4" stroke="#000" stroke-width="1.2"/><line x1="816.2" y1="146.6" x2="825.0" y2="150.3" stroke="#000" stroke-width="2.6"/><line x1="819.4" y1="139.9" x2="827.4" y2="144.0" stroke="#000" stroke-width="1.2"/><line x1="823.0" y1="133.4" x2="830.7" y2="138.1" stroke="#000" stroke-width="1.2"/><line x1="827.1" y1="127.2" x2="834.4" y2="132.5" stroke="#000" stroke-width="1.2"/><line x1="831.8" y1="121.3" x2="838.6" y2="127.1" stroke="#000" stroke-width="1.2"/><line x1="836.8" y1="115.8" x2="843.5" y2="122.5" stroke="#000" stroke-width="2.6"/><line x1="842.3" y1="110.8" x2="848.1" y2="117.6" stroke="#000" stroke-width="1.2"/><line x1="848.2" y1="106.1" x2="853.5" y2="113.4" stroke="#000" stroke-width="1.2"/><line x1="854.4" y1="102.0" x2="859.1" y2="109.7" stroke="#000" stroke-width="1.2"/><line x1="860.9" y1="98.4" x2="865.0" y2="106.4" stroke="#000" stroke-width="1.2"/><line x1="867.6" y1="95.2" x2="871.3" y2="104.0" stroke="#000" stroke-width="2.6"/><line x1="874.6" y1="92.6" x2="877.4" y2="101.2" stroke="#000" stroke-width="1.2"/><line x1="881.8" y1="90.6" x2="883.9" y2="99.4" stroke="#000" stroke-width="1.2"/><line x1="889.1" y1="89.2" x2="890.5" y2="98.1" stroke="#000" stroke-width="1.2"/><line x1="896.5" y1="88.3" x2="897.3" y2="97.3" stroke="#000" stroke-width="1.2"/><line x1="904.0" y1="88.0" x2="904.0" y2="99.0" stroke="#000" stroke-width="2.2"/><line x1="911.5" y1="88.3" x2="910.7" y2="97.3" stroke="#000" stroke-width="1.2"/><line x1="918.9" y1="89.2" x2="917.5" y2="98.1" stroke="#000" stroke-width="1.2"/><line x1="926.2" y1="90.6" x2="924.1" y2="99.4" stroke="#000" stroke-width="1.2"/><line x1="933.4" y1="92.6" x2="930.6" y2="101.2" stroke="#000" stroke-width="1.2"/><line x1="940.4" y1="95.2" x2="936.7" y2="104.0" stroke="#000" stroke-width="2.6"/><line x1="947.1" y1="98.4" x2="943.0" y2="106.4" stroke="#000" stroke-width="1.2"/><line x1="953.6" y1="102.0" x2="948.9" y2="109.7" stroke="#000" stroke-width="1.2"/><line x1="959.8" y1="106.1" x2="954.5" y2="113.4" stroke="#000" stroke-width="1.2"/><line x1="965.7" y1="110.8" x2="959.9" y2="117.6" stroke="#000" stroke-width="1.2"/><line x1="971.2" y1="115.8" x2="964.5" y2="122.5" stroke="#000" stroke-width="2.6"/><line x1="976.2" y1="121.3" x2="969.4" y2="127.1" stroke="#000" stroke-width="1.2"/><line x1="980.9" y1="127.2" x2="973.6" y2="132.5" stroke="#000" stroke-width="1.2"/><line x1="985.0" y1="133.4" x2="977.3" y2="138.1" stroke="#000" stroke-width="1.2"/><line x1="988.6" y1="139.9" x2="980.6" y2="144.0" stroke="#000" stroke-width="1.2"/><line x1="991.8" y1="146.6" x2="983.0" y2="150.3" stroke="#000" stroke-width="2.6"/><line x1="994.4" y1="153.6" x2="985.8" y2="156.4" stroke="#000" stroke-width="1.2"/><line x1="996.4" y1="160.8" x2="987.6" y2="162.9" stroke="#000" stroke-width="1.2"/><line x1="997.8" y1="168.1" x2="988.9" y2="169.5" stroke="#000" stroke-width="1.2"/><line x1="998.7" y1="175.5" x2="989.7" y2="176.3" stroke="#000" stroke-width="1.2"/><line x1="999.0" y1="183.0" x2="989.5" y2="183.0" stroke="#000" stroke-width="2.6"/><line x1="998.7" y1="190.5" x2="989.7" y2="189.7" stroke="#000" stroke-width="1.2"/><line x1="997.8" y1="197.9" x2="988.9" y2="196.5" stroke="#000" stroke-width="1.2"/><line x1="996.4" y1="205.2" x2="987.6" y2="203.1" stroke="#000" stroke-width="1.2"/><line x1="994.4" y1="212.4" x2="985.8" y2="209.6" stroke="#000" stroke-width="1.2"/><line x1="991.8" y1="219.4" x2="983.0" y2="215.7" stroke="#000" stroke-width="2.6"/><line x1="988.6" y1="226.1" x2="980.6" y2="222.0" stroke="#000" stroke-width="1.2"/><line x1="985.0" y1="232.6" x2="977.3" y2="227.9" stroke="#000" stroke-width="1.2"/><line x1="980.9" y1="238.8" x2="973.6" y2="233.5" stroke="#000" stroke-width="1.2"/><line x1="976.2" y1="244.7" x2="969.4" y2="238.9" stroke="#000" stroke-width="1.2"/><line x1="971.2" y1="250.2" x2="964.5" y2="243.5" stroke="#000" stroke-width="2.6"/><text x="904.6" y="111.5" font-size="12" fill="#000" text-anchor="middle">0</text><text x="882.0" y="117.7" font-size="12" fill="#000" text-anchor="middle">-20</text><text x="927.2" y="117.7" font-size="12" fill="#000" text-anchor="middle">20</text><text x="856.8" y="134.7" font-size="12" fill="#000" text-anchor="middle">-40</text><text x="952.2" y="134.7" font-size="12" fill="#000" text-anchor="middle">40</text><text x="840.0" y="159.3" font-size="12" fill="#000" text-anchor="middle">-60</text><text x="969.2" y="159.3" font-size="12" fill="#000" text-anchor="middle">60</text><text x="838.2" y="190.2" font-size="12" fill="#000" text-anchor="middle">-80</text><text x="975.3" y="190.2" font-size="12" fill="#000" text-anchor="middle">80</text><text x="843.2" y="220.7" font-size="12" fill="#000" text-anchor="middle">-100</text><text x="965.1" y="220.7" font-size="12" fill="#000" text-anchor="middle">100</text><text x="860.2" y="246.1" font-size="12" fill="#000" text-anchor="middle">-120</text><text x="948.9" y="246.1" font-size="12" fill="#000" text-anchor="middle">120</text><text x="905.9" y="223.6" font-size="12" fill="#000" text-anchor="middle">r.p.m.</text><rect x="824.5" y="118.5" width="3" height="3" fill="#ff0000"/><rect x="979.5" y="118.5" width="3" height="3" fill="#ff0000"/><path d="M982.6 163.4 L879.4 194.1 L877.1 184.8 Z" fill="#000080"/><circle cx="905" cy="184" r="8" fill="#606060"/><circle cx="904" cy="183" r="8" fill="#c0c0c0" stroke="#000" stroke-width="1.2"/><path d="M904 183 L897.1 179.9 A8 8 0 0 1 900.2 176.5 Z" fill="#fff"/><path d="M904 183 L911.1 185.3 A8 8 0 0 1 906.8 190.0 Z" fill="#808080"/><text x="911.5" y="307.5" font-size="14.5" font-weight="bold" fill="#000080" text-anchor="middle" textLength="134.5" lengthAdjust="spacingAndGlyphs">Main Engine Speed</text><rect x="796" y="315" width="217" height="396" fill="#c0c0c0"/><path d="M796.5 710.5 V315.5 H1012.5" fill="none" stroke="#fff" stroke-width="1"/><path d="M796.5 710.5 H1012.5 V315.5" fill="none" stroke="#808080" stroke-width="1"/><text x="901.5" y="336" font-size="15" fill="#000080" stroke="#000080" stroke-width="0.35" text-anchor="middle" textLength="114" lengthAdjust="spacingAndGlyphs">SYSTEM PANEL</text><defs><pattern id="dith" width="2" height="2" patternUnits="userSpaceOnUse"><rect width="2" height="2" fill="#ff0000"/><rect width="1" height="1" fill="#808080"/><rect x="1" y="1" width="1" height="1" fill="#808080"/></pattern></defs><rect x="803" y="344" width="30" height="30" fill="#000"/><rect x="804" y="345" width="28" height="28" fill="#808080"/><rect x="804" y="345" width="26" height="26" fill="url(#dith)"/><rect x="806" y="347" width="24" height="24" fill="#000"/><rect x="807" y="348" width="22" height="22" fill="url(#dith)"/><rect x="839" y="344" width="136" height="32" fill="#d4d0c8"/><path d="M839.5 375.5 V344.5 H974.5" fill="none" stroke="#fff" stroke-width="1"/><path d="M839.5 375.5 H974.5 V344.5" fill="none" stroke="#404040" stroke-width="1"/><path d="M840.5 374.5 H973.5 V345.5" fill="none" stroke="#808080" stroke-width="1"/><text x="907" y="365" font-size="14.5" font-weight="bold" fill="#000080" text-anchor="middle">Main Engine</text><rect x="981" y="348" width="20" height="25" fill="#d4d0c8"/><path d="M981.5 372.5 V348.5 H1000.5" fill="none" stroke="#fff" stroke-width="1"/><path d="M981.5 372.5 H1000.5 V348.5" fill="none" stroke="#404040" stroke-width="1"/><path d="M982.5 371.5 H999.5 V349.5" fill="none" stroke="#808080" stroke-width="1"/><path d="M986 357 H996 L991 362 Z" fill="#000080"/><rect x="803" y="377" width="30" height="30" fill="#000"/><rect x="804" y="378" width="28" height="28" fill="#808080"/><rect x="804" y="378" width="26" height="26" fill="url(#dith)"/><rect x="806" y="380" width="24" height="24" fill="#000"/><rect x="807" y="381" width="22" height="22" fill="url(#dith)"/><rect x="839" y="377" width="136" height="32" fill="#d4d0c8"/><path d="M839.5 408.5 V377.5 H974.5" fill="none" stroke="#fff" stroke-width="1"/><path d="M839.5 408.5 H974.5 V377.5" fill="none" stroke="#404040" stroke-width="1"/><path d="M840.5 407.5 H973.5 V378.5" fill="none" stroke="#808080" stroke-width="1"/><text x="907" y="398" font-size="14.5" font-weight="bold" fill="#000080" text-anchor="middle">Fuel</text><rect x="981" y="381" width="20" height="25" fill="#d4d0c8"/><path d="M981.5 405.5 V381.5 H1000.5" fill="none" stroke="#fff" stroke-width="1"/><path d="M981.5 405.5 H1000.5 V381.5" fill="none" stroke="#404040" stroke-width="1"/><path d="M982.5 404.5 H999.5 V382.5" fill="none" stroke="#808080" stroke-width="1"/><path d="M986 390 H996 L991 395 Z" fill="#000080"/><rect x="803" y="410" width="30" height="30" fill="#000"/><rect x="804" y="411" width="28" height="28" fill="#808080"/><rect x="804" y="411" width="26" height="26" fill="url(#dith)"/><rect x="806" y="413" width="24" height="24" fill="#000"/><rect x="807" y="414" width="22" height="22" fill="url(#dith)"/><rect x="839" y="410" width="136" height="32" fill="#d4d0c8"/><path d="M839.5 441.5 V410.5 H974.5" fill="none" stroke="#fff" stroke-width="1"/><path d="M839.5 441.5 H974.5 V410.5" fill="none" stroke="#404040" stroke-width="1"/><path d="M840.5 440.5 H973.5 V411.5" fill="none" stroke="#808080" stroke-width="1"/><text x="907" y="431" font-size="14.5" font-weight="bold" fill="#000080" text-anchor="middle">Cooling</text><rect x="981" y="414" width="20" height="25" fill="#d4d0c8"/><path d="M981.5 438.5 V414.5 H1000.5" fill="none" stroke="#fff" stroke-width="1"/><path d="M981.5 438.5 H1000.5 V414.5" fill="none" stroke="#404040" stroke-width="1"/><path d="M982.5 437.5 H999.5 V415.5" fill="none" stroke="#808080" stroke-width="1"/><path d="M986 423 H996 L991 428 Z" fill="#000080"/><rect x="803" y="443" width="30" height="30" fill="#000"/><rect x="804" y="444" width="28" height="28" fill="#808080"/><rect x="804" y="444" width="26" height="26" fill="url(#dith)"/><rect x="806" y="446" width="24" height="24" fill="#000"/><rect x="807" y="447" width="22" height="22" fill="url(#dith)"/><rect x="839" y="443" width="136" height="32" fill="#d4d0c8"/><path d="M839.5 474.5 V443.5 H974.5" fill="none" stroke="#fff" stroke-width="1"/><path d="M839.5 474.5 H974.5 V443.5" fill="none" stroke="#404040" stroke-width="1"/><path d="M840.5 473.5 H973.5 V444.5" fill="none" stroke="#808080" stroke-width="1"/><text x="907" y="464" font-size="14.5" font-weight="bold" fill="#000080" text-anchor="middle">Lubricating</text><rect x="981" y="447" width="20" height="25" fill="#d4d0c8"/><path d="M981.5 471.5 V447.5 H1000.5" fill="none" stroke="#fff" stroke-width="1"/><path d="M981.5 471.5 H1000.5 V447.5" fill="none" stroke="#404040" stroke-width="1"/><path d="M982.5 470.5 H999.5 V448.5" fill="none" stroke="#808080" stroke-width="1"/><path d="M986 456 H996 L991 461 Z" fill="#000080"/><rect x="803" y="477" width="30" height="30" fill="#000"/><rect x="804" y="478" width="28" height="28" fill="#808080"/><rect x="804" y="478" width="26" height="26" fill="url(#dith)"/><rect x="806" y="480" width="24" height="24" fill="#000"/><rect x="807" y="481" width="22" height="22" fill="url(#dith)"/><rect x="839" y="476" width="136" height="32" fill="#d4d0c8"/><path d="M839.5 507.5 V476.5 H974.5" fill="none" stroke="#fff" stroke-width="1"/><path d="M839.5 507.5 H974.5 V476.5" fill="none" stroke="#404040" stroke-width="1"/><path d="M840.5 506.5 H973.5 V477.5" fill="none" stroke="#808080" stroke-width="1"/><text x="907" y="497" font-size="14.5" font-weight="bold" fill="#000080" text-anchor="middle">Compr. .Air</text><rect x="981" y="480" width="20" height="25" fill="#d4d0c8"/><path d="M981.5 504.5 V480.5 H1000.5" fill="none" stroke="#fff" stroke-width="1"/><path d="M981.5 504.5 H1000.5 V480.5" fill="none" stroke="#404040" stroke-width="1"/><path d="M982.5 503.5 H999.5 V481.5" fill="none" stroke="#808080" stroke-width="1"/><path d="M986 489 H996 L991 494 Z" fill="#000080"/><rect x="803" y="510" width="30" height="30" fill="#000"/><rect x="804" y="511" width="28" height="28" fill="#808080"/><rect x="804" y="511" width="26" height="26" fill="url(#dith)"/><rect x="806" y="513" width="24" height="24" fill="#000"/><rect x="807" y="514" width="22" height="22" fill="url(#dith)"/><rect x="839" y="509" width="136" height="32" fill="#d4d0c8"/><path d="M839.5 540.5 V509.5 H974.5" fill="none" stroke="#fff" stroke-width="1"/><path d="M839.5 540.5 H974.5 V509.5" fill="none" stroke="#404040" stroke-width="1"/><path d="M840.5 539.5 H973.5 V510.5" fill="none" stroke="#808080" stroke-width="1"/><text x="907" y="530" font-size="14.5" font-weight="bold" fill="#000080" text-anchor="middle">Power Plant</text><rect x="981" y="513" width="20" height="25" fill="#d4d0c8"/><path d="M981.5 537.5 V513.5 H1000.5" fill="none" stroke="#fff" stroke-width="1"/><path d="M981.5 537.5 H1000.5 V513.5" fill="none" stroke="#404040" stroke-width="1"/><path d="M982.5 536.5 H999.5 V514.5" fill="none" stroke="#808080" stroke-width="1"/><path d="M986 522 H996 L991 527 Z" fill="#000080"/><rect x="803" y="543" width="30" height="30" fill="#000"/><rect x="804" y="544" width="28" height="28" fill="#808080"/><rect x="804" y="544" width="26" height="26" fill="url(#dith)"/><rect x="806" y="546" width="24" height="24" fill="#000"/><rect x="807" y="547" width="22" height="22" fill="url(#dith)"/><rect x="839" y="542" width="136" height="32" fill="#d4d0c8"/><path d="M839.5 573.5 V542.5 H974.5" fill="none" stroke="#fff" stroke-width="1"/><path d="M839.5 573.5 H974.5 V542.5" fill="none" stroke="#404040" stroke-width="1"/><path d="M840.5 572.5 H973.5 V543.5" fill="none" stroke="#808080" stroke-width="1"/><text x="907" y="563" font-size="14.5" font-weight="bold" fill="#000080" text-anchor="middle">Steam</text><rect x="981" y="546" width="20" height="25" fill="#d4d0c8"/><path d="M981.5 570.5 V546.5 H1000.5" fill="none" stroke="#fff" stroke-width="1"/><path d="M981.5 570.5 H1000.5 V546.5" fill="none" stroke="#404040" stroke-width="1"/><path d="M982.5 569.5 H999.5 V547.5" fill="none" stroke="#808080" stroke-width="1"/><path d="M986 555 H996 L991 560 Z" fill="#000080"/><rect x="803" y="576" width="30" height="30" fill="#000"/><rect x="804" y="577" width="28" height="28" fill="#808080"/><rect x="804" y="577" width="26" height="26" fill="url(#dith)"/><rect x="806" y="579" width="24" height="24" fill="#000"/><rect x="807" y="580" width="22" height="22" fill="url(#dith)"/><rect x="839" y="575" width="136" height="32" fill="#d4d0c8"/><path d="M839.5 606.5 V575.5 H974.5" fill="none" stroke="#fff" stroke-width="1"/><path d="M839.5 606.5 H974.5 V575.5" fill="none" stroke="#404040" stroke-width="1"/><path d="M840.5 605.5 H973.5 V576.5" fill="none" stroke="#808080" stroke-width="1"/><text x="907" y="596" font-size="14.5" font-weight="bold" fill="#000080" text-anchor="middle">Miscellaneous</text><rect x="981" y="579" width="20" height="25" fill="#d4d0c8"/><path d="M981.5 603.5 V579.5 H1000.5" fill="none" stroke="#fff" stroke-width="1"/><path d="M981.5 603.5 H1000.5 V579.5" fill="none" stroke="#404040" stroke-width="1"/><path d="M982.5 602.5 H999.5 V580.5" fill="none" stroke="#808080" stroke-width="1"/><path d="M986 588 H996 L991 593 Z" fill="#000080"/><rect x="803" y="613" width="199" height="19" fill="#d4d0c8"/><path d="M803.5 631.5 V613.5 H1001.5" fill="none" stroke="#fff" stroke-width="1"/><path d="M803.5 631.5 H1001.5 V613.5" fill="none" stroke="#404040" stroke-width="1"/><path d="M804.5 630.5 H1000.5 V614.5" fill="none" stroke="#808080" stroke-width="1"/><text x="902.5" y="628" font-size="14.5" font-weight="bold" fill="#000080" text-anchor="middle">Alarm List</text><circle cx="829" cy="665" r="23" fill="#909090"/><circle cx="828" cy="664" r="22.7" fill="#d0d0d0" stroke="#101010" stroke-width="1"/><circle cx="828" cy="664" r="19.5" fill="none" stroke="#c8c8c8" stroke-width="3"/><circle cx="828" cy="664" r="16.6" fill="#0000ff" stroke="#101010" stroke-width="1"/><path d="M813.13 666.62 A15.1 15.1 0 0 1 821.62 650.31" fill="none" stroke="#fff" stroke-width="2"/><path d="M842.59 660.09 A15.1 15.1 0 0 1 831.91 678.59" fill="none" stroke="#808080" stroke-width="2"/><circle cx="828" cy="664" r="13.8" fill="#0000ff" stroke="#101010" stroke-width="1"/><circle cx="904" cy="665" r="23" fill="#909090"/><circle cx="903" cy="664" r="22.7" fill="#d0d0d0" stroke="#101010" stroke-width="1"/><circle cx="903" cy="664" r="19.5" fill="none" stroke="#c8c8c8" stroke-width="3"/><circle cx="903" cy="664" r="16.6" fill="#ff0000" stroke="#101010" stroke-width="1"/><path d="M888.13 666.62 A15.1 15.1 0 0 1 896.62 650.31" fill="none" stroke="#fff" stroke-width="2"/><path d="M917.59 660.09 A15.1 15.1 0 0 1 906.91 678.59" fill="none" stroke="#808080" stroke-width="2"/><circle cx="903" cy="664" r="13.8" fill="#ff0000" stroke="#101010" stroke-width="1"/><text x="827" y="703.5" font-size="14.5" font-weight="bold" fill="#000080" text-anchor="middle" textLength="44.5" lengthAdjust="spacingAndGlyphs">Buzzer</text><text x="902.8" y="703.5" font-size="14.5" font-weight="bold" fill="#000080" text-anchor="middle" textLength="60" lengthAdjust="spacingAndGlyphs">Acknowl.</text><text x="978.7" y="703.5" font-size="14.5" font-weight="bold" fill="#000080" text-anchor="middle" textLength="44.7" lengthAdjust="spacingAndGlyphs">Bridge</text><rect x="955" y="639" width="50" height="50" fill="#d4d0c8"/><path d="M955.5 688.5 V639.5 H1004.5" fill="none" stroke="#fff" stroke-width="1"/><path d="M955.5 688.5 H1004.5 V639.5" fill="none" stroke="#404040" stroke-width="1"/><path d="M956.5 687.5 H1003.5 V640.5" fill="none" stroke="#808080" stroke-width="1"/><g stroke="#000" fill="none"><line x1="979.5" y1="660.5" x2="979.5" y2="652.0" stroke-width="2.8"/><line x1="979.5" y1="649.5" x2="979.5" y2="644.5" stroke-width="3.9"/><line x1="981.6" y1="661.4" x2="987.6" y2="655.4" stroke-width="2.8"/><line x1="989.4" y1="653.6" x2="992.9" y2="650.1" stroke-width="3.9"/><line x1="982.5" y1="663.5" x2="991.0" y2="663.5" stroke-width="2.8"/><line x1="993.5" y1="663.5" x2="998.5" y2="663.5" stroke-width="3.9"/><line x1="981.6" y1="665.6" x2="987.6" y2="671.6" stroke-width="2.8"/><line x1="989.4" y1="673.4" x2="992.9" y2="676.9" stroke-width="3.9"/><line x1="979.5" y1="666.5" x2="979.5" y2="675.0" stroke-width="2.8"/><line x1="979.5" y1="677.5" x2="979.5" y2="682.5" stroke-width="3.9"/><line x1="977.4" y1="665.6" x2="971.4" y2="671.6" stroke-width="2.8"/><line x1="969.6" y1="673.4" x2="966.1" y2="676.9" stroke-width="3.9"/><line x1="976.5" y1="663.5" x2="968.0" y2="663.5" stroke-width="2.8"/><line x1="965.5" y1="663.5" x2="960.5" y2="663.5" stroke-width="3.9"/><line x1="977.4" y1="661.4" x2="971.4" y2="655.4" stroke-width="2.8"/><line x1="969.6" y1="653.6" x2="966.1" y2="650.1" stroke-width="3.9"/><circle cx="979.5" cy="663.5" r="12.9" stroke-width="4.3"/></g><g stroke="#ffff00" fill="none"><line x1="979.5" y1="660.5" x2="979.5" y2="652.0" stroke-width="1.2"/><line x1="979.5" y1="649.5" x2="979.5" y2="645.3" stroke-width="2"/><line x1="981.6" y1="661.4" x2="987.6" y2="655.4" stroke-width="1.2"/><line x1="989.4" y1="653.6" x2="992.4" y2="650.6" stroke-width="2"/><line x1="982.5" y1="663.5" x2="991.0" y2="663.5" stroke-width="1.2"/><line x1="993.5" y1="663.5" x2="997.7" y2="663.5" stroke-width="2"/><line x1="981.6" y1="665.6" x2="987.6" y2="671.6" stroke-width="1.2"/><line x1="989.4" y1="673.4" x2="992.4" y2="676.4" stroke-width="2"/><line x1="979.5" y1="666.5" x2="979.5" y2="675.0" stroke-width="1.2"/><line x1="979.5" y1="677.5" x2="979.5" y2="681.7" stroke-width="2"/><line x1="977.4" y1="665.6" x2="971.4" y2="671.6" stroke-width="1.2"/><line x1="969.6" y1="673.4" x2="966.6" y2="676.4" stroke-width="2"/><line x1="976.5" y1="663.5" x2="968.0" y2="663.5" stroke-width="1.2"/><line x1="965.5" y1="663.5" x2="961.3" y2="663.5" stroke-width="2"/><line x1="977.4" y1="661.4" x2="971.4" y2="655.4" stroke-width="1.2"/><line x1="969.6" y1="653.6" x2="966.6" y2="650.6" stroke-width="2"/><circle cx="979.5" cy="663.5" r="12.9" stroke-width="2.3"/></g><circle cx="979.5" cy="663.5" r="3" fill="#ffff00" stroke="#000" stroke-width="0.8"/></svg>
</div></body></html>
